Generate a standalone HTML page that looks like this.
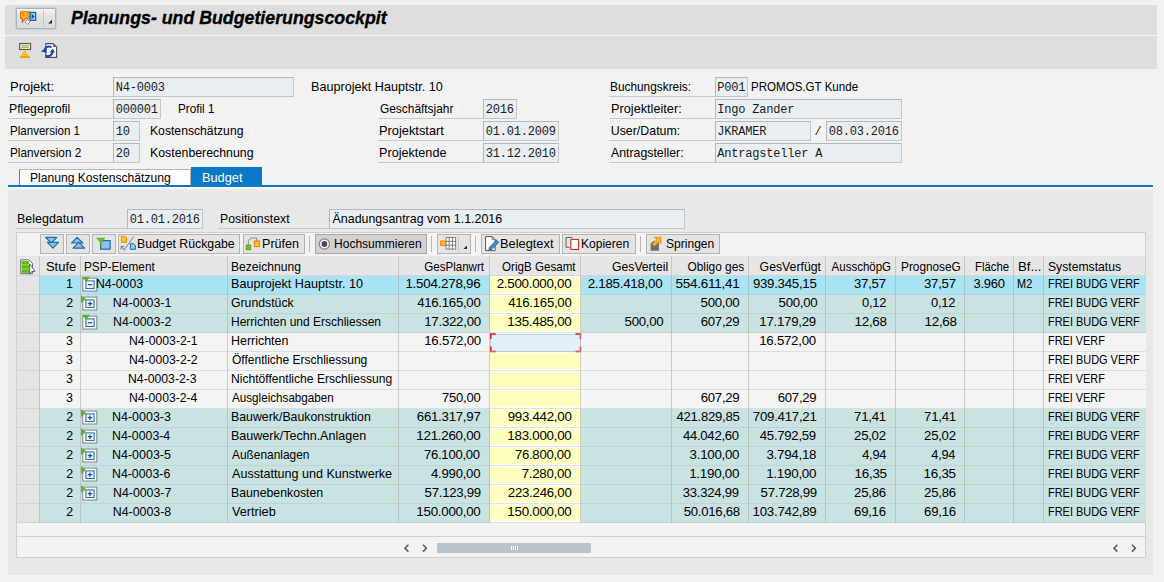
<!DOCTYPE html>
<html lang="de"><head><meta charset="utf-8"><title>Planungs- und Budgetierungscockpit</title>
<style>
html,body{margin:0;padding:0;}
body{width:1164px;height:582px;overflow:hidden;background:#f2f2f2;font-family:"Liberation Sans",sans-serif;font-size:12px;color:#000;}
#root{position:relative;width:1164px;height:582px;overflow:hidden;}
#root div{position:absolute;box-sizing:border-box;}
#root svg{position:absolute;overflow:visible;}
.t,.m,.ttl,.tw{position:absolute;white-space:pre;line-height:14px;height:14px;margin-top:-11px;font-size:12.4px;}
.m{font-family:"Liberation Mono",monospace;font-size:12px;letter-spacing:-0.2px;margin-top:-10.2px;color:#1c1c1c;}
.ttl{font-weight:bold;font-style:italic;font-size:17.6px;line-height:20px;height:20px;margin-top:-16px;-webkit-text-stroke:0.35px #000;}
.tw{color:#fff;}
.inp{background:#e9eef2;border:1px solid #c3c7ca;border-top-color:#b4b8bc;border-left-color:#b4b8bc;}
.ul{background:#c9c9c9;}
.btn{background:#e4e4e4;border:1px solid #b3b3b3;}

</style></head><body>
<div id="root">
<div style="left:5px;top:5px;width:1152px;height:30px;background:#dedede;"></div>
<div style="left:5px;top:35px;width:1152px;height:1px;background:#fafafa;"></div>
<div style="left:5px;top:36px;width:1152px;height:32.5px;background:#dedede;"></div>
<div style="left:16px;top:8.2px;width:40px;height:20.4px;background:linear-gradient(#f6f6f6,#e4e4e4 30%,#dcdcdc);border:1px solid #9fb4c8;border-radius:1px;box-shadow:0 0 0 1px rgba(160,185,210,0.35);"></div>
<div style="left:43px;top:10px;width:1px;height:17px;background:#c4c4c4;"></div>
<svg style="left:18px;top:9px" width="24" height="18" viewBox="18 9 24 18">
<path d="M20.7 11.7h8.6v6.4h-3.6l-3.4 4v-4h-1.6z" fill="#ffd21c" stroke="#e8590c" stroke-width="1.1"/>
<path d="M22.3 13.6h1.6m1 0h1m1 0h1.2M22.3 15.8h2.8m1 0h2" stroke="#e8590c" stroke-width="1"/>
<path d="M27.5 19.2l2.6 2.6-2.6 2.6-2.6-2.6z" fill="#fff" stroke="#666" stroke-width="0.8"/>
<rect x="30.1" y="12.4" width="5.6" height="8" fill="#9cc4ec" stroke="#0a6eb4" stroke-width="1.2"/>
<path d="M31.6 13.8v5.2l3-2.6z" fill="#0a50a0"/>
</svg>
<svg style="left:47px;top:19px" width="6" height="6" viewBox="0 0 6 6"><path d="M5 0.8V4.6H1.2z" fill="#222"/></svg>
<span id="t1" class="ttl" style="transform:scaleX(1.009);transform-origin:0 0;left:70.7px;top:24.0px;">Planungs- und Budgetierungscockpit</span>
<svg style="left:17px;top:41px" width="18" height="19" viewBox="17 41 18 19">
<rect x="19.6" y="43.5" width="11" height="6" fill="#e6f0b8" stroke="#585858" stroke-width="1.1"/>
<path d="M21.5 45.6h7.2M21.5 47.4h7.2" stroke="#8a9a60" stroke-width="0.8"/>
<path d="M25.1 50.2l-4.9 7.2h9.8z" fill="#ffc20e"/>
<path d="M20.2 57.1h9.8" stroke="#f07018" stroke-width="1"/>
<path d="M25.1 50.2l-4.9 7.2" stroke="#f8981c" stroke-width="0.6" fill="none"/>
</svg>
<svg style="left:40px;top:41px" width="19" height="19" viewBox="40 41 19 19">
<path d="M45.8 43.6h7.4l3.4 3.4v10.4h-10.8z" fill="#fff" stroke="#4a4a4a" stroke-width="1.1"/>
<path d="M53.2 43.6v3.4h3.4z" fill="#666"/>
<path d="M51.4 47.3A4.5 4.5 0 0 0 44.6 49.8" fill="none" stroke="#1746a8" stroke-width="2.1"/>
<path d="M40.9 51.2L46.2 47.9L46.8 52.9Z" fill="#1746a8"/>
<path d="M45.6 55.6A4.6 4.6 0 0 0 52.4 52" fill="none" stroke="#1746a8" stroke-width="2.1"/>
<path d="M52.5 48.4L49.6 52.6H55.2Z" fill="#1746a8"/>
</svg>
<span id="t2" class="t" style="transform:scaleX(1.048);transform-origin:0 0;left:9.7px;top:91px;">Projekt:</span>
<div class="ul" style="left:8px;top:96px;width:105px;height:1px;"></div>
<span id="t3" class="t" style="transform:scaleX(0.989);transform-origin:0 0;left:9.3px;top:113px;">Pflegeprofil</span>
<div class="ul" style="left:8px;top:118px;width:105px;height:1px;"></div>
<span id="t4" class="t" style="transform:scaleX(0.933);transform-origin:0 0;left:9.6px;top:135px;">Planversion 1</span>
<div class="ul" style="left:8px;top:140px;width:105px;height:1px;"></div>
<span id="t5" class="t" style="transform:scaleX(0.949);transform-origin:0 0;left:9.6px;top:157px;">Planversion 2</span>
<div class="ul" style="left:8px;top:162px;width:105px;height:1px;"></div>
<div class="inp" style="left:113px;top:77px;width:181px;height:20px;"></div>
<span id="t6" class="m" style="left:115.8px;top:91px;">N4-0003</span>
<div class="inp" style="left:113px;top:99px;width:47.5px;height:20px;"></div>
<span id="t7" class="m" style="left:115.8px;top:113px;">000001</span>
<div class="inp" style="left:113px;top:121px;width:26.5px;height:20px;"></div>
<span id="t8" class="m" style="left:115.8px;top:135px;">10</span>
<div class="inp" style="left:113px;top:143px;width:26.5px;height:20px;"></div>
<span id="t9" class="m" style="left:115.8px;top:157px;">20</span>
<span id="t10" class="t" style="transform:scaleX(0.944);transform-origin:0 0;left:178.2px;top:113px;">Profil 1</span>
<span id="t11" class="t" style="transform:scaleX(0.983);transform-origin:0 0;left:149.8px;top:135px;">Kostenschätzung</span>
<span id="t12" class="t" style="transform:scaleX(0.995);transform-origin:0 0;left:150.1px;top:157px;">Kostenberechnung</span>
<span id="t13" class="t" style="transform:scaleX(1.018);transform-origin:0 0;left:311.3px;top:91px;">Bauprojekt Hauptstr. 10</span>
<span id="t14" class="t" style="transform:scaleX(0.960);transform-origin:0 0;left:379.9px;top:113px;">Geschäftsjahr</span>
<div class="ul" style="left:377.5px;top:118px;width:105.5px;height:1px;"></div>
<span id="t15" class="t" style="transform:scaleX(1.035);transform-origin:0 0;left:379.1px;top:135px;">Projektstart</span>
<div class="ul" style="left:377.5px;top:140px;width:105.5px;height:1px;"></div>
<span id="t16" class="t" style="transform:scaleX(1.020);transform-origin:0 0;left:379.1px;top:157px;">Projektende</span>
<div class="ul" style="left:377.5px;top:162px;width:105.5px;height:1px;"></div>
<div class="inp" style="left:483px;top:99px;width:34px;height:20px;"></div>
<span id="t17" class="m" style="left:485.8px;top:113px;">2016</span>
<div class="inp" style="left:483px;top:121px;width:76px;height:20px;"></div>
<span id="t18" class="m" style="left:485.8px;top:135px;">01.01.2009</span>
<div class="inp" style="left:483px;top:143px;width:76px;height:20px;"></div>
<span id="t19" class="m" style="left:485.8px;top:157px;">31.12.2010</span>
<span id="t20" class="t" style="transform:scaleX(0.957);transform-origin:0 0;left:610.3px;top:91px;">Buchungskreis:</span>
<div class="ul" style="left:608.5px;top:96px;width:106px;height:1px;"></div>
<span id="t21" class="t" style="transform:scaleX(1.027);transform-origin:0 0;left:610.9px;top:113px;">Projektleiter:</span>
<div class="ul" style="left:608.5px;top:118px;width:106px;height:1px;"></div>
<span id="t22" class="t" style="left:610.7px;top:135px;">User/Datum:</span>
<div class="ul" style="left:608.5px;top:140px;width:106px;height:1px;"></div>
<span id="t23" class="t" style="transform:scaleX(0.994);transform-origin:0 0;left:610.8px;top:157px;">Antragsteller:</span>
<div class="ul" style="left:608.5px;top:162px;width:106px;height:1px;"></div>
<div class="inp" style="left:714.5px;top:77px;width:33px;height:20px;"></div>
<span id="t24" class="m" style="left:717.3px;top:91px;">P001</span>
<span id="t25" class="t" style="transform:scaleX(0.933);transform-origin:0 0;left:751.4px;top:91px;">PROMOS.GT Kunde</span>
<div class="inp" style="left:714.5px;top:99px;width:187px;height:20px;"></div>
<span id="t26" class="m" style="left:717.3px;top:113px;">Ingo Zander</span>
<div class="inp" style="left:714.5px;top:121px;width:96px;height:20px;"></div>
<span id="t27" class="m" style="left:717.3px;top:135px;">JKRAMER</span>
<span id="t28" class="m" style="left:814.6px;top:135px;">/</span>
<div class="inp" style="left:826px;top:121px;width:75.5px;height:20px;"></div>
<span id="t29" class="m" style="left:828.8px;top:135px;">08.03.2016</span>
<div class="inp" style="left:714.5px;top:143px;width:187px;height:20px;"></div>
<span id="t30" class="m" style="left:717.3px;top:157px;">Antragsteller A</span>
<div style="left:18.8px;top:168.6px;width:172.2px;height:17px;background:#fefefe;border:1px solid #b4b4b4;border-left-color:#7c7c7c;border-bottom:none;"></div>
<div style="left:190.8px;top:166.7px;width:71.3px;height:18.5px;background:#0a78c4;"></div>
<span id="t31" class="t" style="transform:scaleX(0.977);transform-origin:0 0;left:29.5px;top:181.6px;">Planung Kostenschätzung</span>
<span id="t32" class="t tw" style="transform:scaleX(1.030);transform-origin:0 0;left:201.6px;top:181.6px;">Budget</span>
<div style="left:8px;top:184.8px;width:1145px;height:2.2px;background:#0a78c4;"></div>
<div style="left:8px;top:187px;width:1145px;height:387.5px;background:#e8e8e8;"></div>
<div style="left:8px;top:187px;width:1145px;height:3px;background:linear-gradient(#fcfcfc,#f6f6f6 55%,#e8e8e8);"></div>
<span id="t33" class="t" style="transform:scaleX(1.006);transform-origin:0 0;left:16.5px;top:223px;">Belegdatum</span>
<div class="ul" style="left:15.5px;top:228px;width:111.5px;height:1px;"></div>
<div class="inp" style="left:127px;top:209px;width:75.5px;height:20px;"></div>
<span id="t34" class="m" style="left:129.8px;top:223px;">01.01.2016</span>
<span id="t35" class="t" style="transform:scaleX(0.991);transform-origin:0 0;left:219.5px;top:223px;">Positionstext</span>
<div class="ul" style="left:217.5px;top:228px;width:111.5px;height:1px;"></div>
<div class="inp" style="left:329px;top:209px;width:356px;height:20px;"></div>
<span id="t36" class="t" style="left:332.6px;top:223px;">Änadungsantrag vom 1.1.2016</span>
<div style="left:15.5px;top:231.5px;width:1130px;height:326.5px;background:#f3f3f3;border:1px solid #cfcfcf;"></div>
<div style="left:16.5px;top:232.5px;width:1128px;height:22.5px;background:#f3f3f3;"></div>
<div class="btn" style="left:40px;top:234px;width:23.8px;height:19.5px;"></div>
<div class="btn" style="left:66px;top:234px;width:23.8px;height:19.5px;"></div>
<div class="btn" style="left:92.3px;top:234px;width:23.8px;height:19.5px;"></div>
<div class="btn" style="left:118.2px;top:234px;width:122px;height:19.5px;"></div>
<div class="btn" style="left:242.6px;top:234px;width:62px;height:19.5px;"></div>
<div style="left:309px;top:236px;width:1px;height:16px;background:#b8b8b8;"></div>
<div class="btn" style="left:314.5px;top:234px;width:112.5px;height:19.5px;background:#d2d2d2;border-color:#a8a8a8;"></div>
<div style="left:431px;top:236px;width:1px;height:16px;background:#b8b8b8;"></div>
<div class="btn" style="left:437px;top:234px;width:33.5px;height:19.5px;"></div>
<div style="left:457.5px;top:236px;width:1px;height:16px;background:#c8c8c8;"></div>
<div style="left:475px;top:236px;width:1px;height:16px;background:#b8b8b8;"></div>
<div class="btn" style="left:481.2px;top:234px;width:78.6px;height:19.5px;"></div>
<div class="btn" style="left:562px;top:234px;width:73.8px;height:19.5px;"></div>
<div style="left:640.2px;top:236px;width:1px;height:16px;background:#b8b8b8;"></div>
<div class="btn" style="left:646px;top:234px;width:73.8px;height:19.5px;"></div>
<span id="t37" class="t" style="transform:scaleX(0.991);transform-origin:0 0;left:136.9px;top:248px;">Budget Rückgabe</span>
<span id="t38" class="t" style="transform:scaleX(1.015);transform-origin:0 0;left:261.8px;top:248px;">Prüfen</span>
<span id="t39" class="t" style="transform:scaleX(0.971);transform-origin:0 0;left:333.5px;top:248px;">Hochsummieren</span>
<span id="t40" class="t" style="transform:scaleX(1.035);transform-origin:0 0;left:500.1px;top:248px;">Belegtext</span>
<span id="t41" class="t" style="transform:scaleX(0.970);transform-origin:0 0;left:581.2px;top:248px;">Kopieren</span>
<span id="t42" class="t" style="transform:scaleX(0.973);transform-origin:0 0;left:665.7px;top:248px;">Springen</span>
<svg style="left:40px;top:234px" width="80" height="20" viewBox="40 234 80 20">
<path d="M45.6 237.4h11.2l-5.6 5.6z" fill="#9bbce0" stroke="#1470ac" stroke-width="1.2" stroke-linejoin="round"/>
<path d="M47.4 242.4h11.2l-5.6 5.8z" fill="#9bbce0" stroke="#1470ac" stroke-width="1.2" stroke-linejoin="round"/>
<path d="M77.2 237.4l5.6 5.6h-11.2z" fill="#9bbce0" stroke="#1470ac" stroke-width="1.2" stroke-linejoin="round"/>
<path d="M78.8 242.2l5.8 6h-11.6z" fill="#9bbce0" stroke="#1470ac" stroke-width="1.2" stroke-linejoin="round"/>
<rect x="100.6" y="240.6" width="9.6" height="8.6" fill="#9bbce0" stroke="#1470ac" stroke-width="1.2"/>
<path d="M96.6 238h8.4l-3.4 4v3.4h-1.6v-3.4z" fill="#6cc02c" stroke="#5aa824" stroke-width="0.5"/>
</svg>
<svg style="left:120px;top:235px" width="18" height="18" viewBox="120 235 18 18">
<path d="M121.4 236.2h3.4l1.8 1.8v4.4h-5.2z" fill="#ffc414" stroke="#f08010" stroke-width="0.9"/>
<path d="M133.6 236.8l-9.6 13.4" stroke="#707070" stroke-width="0.9"/>
<path d="M130.4 243.7h3.2l1.8 1.8v3.8h-5z" fill="#9cc4ec" stroke="#0a6eb4" stroke-width="1"/>
<path d="M121.2 246.4h3.2m-3.2 0v3m0-3l3.6 4" stroke="#555" stroke-width="0.8" fill="none"/>
</svg>
<svg style="left:245px;top:236px" width="17" height="16" viewBox="245 236 17 16">
<path d="M248.4 245v-4.6l2.8-2.4h5.6v3" stroke="#808080" stroke-width="0.9" fill="none"/>
<rect x="246.2" y="245" width="4.6" height="4.8" fill="#6cc02c" stroke="#4a9a1c" stroke-width="0.8"/>
<rect x="254.4" y="241" width="5.2" height="5.6" fill="#ffc414" stroke="#f07810" stroke-width="1"/>
</svg>
<svg style="left:318px;top:238px" width="12" height="12" viewBox="0 0 12 12">
<circle cx="6.4" cy="6" r="5.1" fill="#f6f6f6" stroke="#808080" stroke-width="1.2"/><circle cx="6.4" cy="6" r="2.9" fill="#4a4a4a"/></svg>
<svg style="left:440px;top:236px" width="30" height="16" viewBox="440 236 30 16">
<path d="M446 237.5h9.6v11.6h-9.6zM446 241.4h9.6M446 245.2h9.6M449.2 237.5v11.6M452.4 237.5v11.6" stroke="#707070" stroke-width="0.9" fill="#fff"/>
<rect x="440.6" y="241" width="5" height="4.4" fill="#ffc414" stroke="#f07810" stroke-width="0.9"/>
<path d="M467 245.4v3.6h-3.6z" fill="#222"/>
</svg>
<svg style="left:483px;top:235px" width="18" height="18" viewBox="483 235 18 18">
<path d="M485.6 236.6h6.6l3 3v11h-9.6z" fill="#fff" stroke="#555" stroke-width="1"/>
<path d="M492.2 236.6v3h3" fill="none" stroke="#555" stroke-width="0.8"/>
<path d="M496.4 240l2.4 2.2-7 7.4-3 0.8 0.6-3z" fill="#3c8cd0" stroke="#1a64a8" stroke-width="0.8"/>
</svg>
<svg style="left:564px;top:236px" width="18" height="16" viewBox="564 236 18 16">
<path d="M572.6 237.5h-6.6v9.8h3.6" fill="none" stroke="#606060" stroke-width="1"/>
<rect x="570.8" y="239.5" width="7.8" height="10" fill="#fff" stroke="#c8341c" stroke-width="1.1"/>
</svg>
<svg style="left:648px;top:235px" width="18" height="18" viewBox="648 235 18 18">
<path d="M650.6 243.4l3.4-3 2.4 3.4 2.6-1.4v8.4h-8.4z" fill="#707070"/>
<path d="M654.4 237.2h6.6v6.6l-2.2-2.2-4.4 4.6-2.2-2.2 4.6-4.4z" fill="#ffb414" stroke="#f07810" stroke-width="0.7"/>
</svg>
<div style="left:16.5px;top:255.5px;width:1128px;height:20.5px;background:#e6e6e6;"></div>
<svg style="left:19px;top:258px" width="18" height="18" viewBox="19 258 18 18">
<path d="M20.7 259.9h8.3l3.5 3.5v10.3h-11.8z" fill="#fff" stroke="#6a6a6a" stroke-width="1"/>
<path d="M21.7 261.2h7.2v11.6h-7.2z" fill="#a8d878"/>
<path d="M21.7 261.3h7.2v3h-7.2zM21.7 265.2h7.2v3.3h-7.2zM21.7 269.5h7.2v3.2h-7.2z" fill="#5cb800"/>
<path d="M29.6 263.9v9.8l2.4-2.2 2.9-0.2z" fill="#fff" stroke="#2a4aa0" stroke-width="0.9"/>
</svg>
<span id="t43" class="t" style="transform:scaleX(1.043);transform-origin:0 0;left:45.5px;top:271px;">Stufe</span>
<span id="t44" class="t" style="transform:scaleX(0.951);transform-origin:0 0;left:83.8px;top:271px;">PSP-Element</span>
<span id="t45" class="t" style="transform:scaleX(0.975);transform-origin:0 0;left:231.1px;top:271px;">Bezeichnung</span>
<span id="t46" class="t" style="transform:scaleX(0.934);transform-origin:100% 0;right:679.6px;top:271px;">GesPlanwrt</span>
<span id="t47" class="t" style="transform:scaleX(0.935);transform-origin:100% 0;right:588.1px;top:271px;">OrigB Gesamt</span>
<span id="t48" class="t" style="transform:scaleX(0.981);transform-origin:100% 0;right:496.2px;top:271px;">GesVerteil</span>
<span id="t49" class="t" style="transform:scaleX(0.959);transform-origin:100% 0;right:419.9px;top:271px;">Obligo ges</span>
<span id="t50" class="t" style="transform:scaleX(0.990);transform-origin:100% 0;right:343.2px;top:271px;">GesVerfügt</span>
<span id="t51" class="t" style="transform:scaleX(0.929);transform-origin:100% 0;right:273.1px;top:271px;">AusschöpG</span>
<span id="t52" class="t" style="transform:scaleX(0.951);transform-origin:100% 0;right:203.6px;top:271px;">PrognoseG</span>
<span id="t53" class="t" style="transform:scaleX(0.919);transform-origin:100% 0;right:154.8px;top:271px;">Fläche</span>
<span id="t54" class="t" style="transform:scaleX(1.063);transform-origin:0 0;left:1017.8px;top:271px;">Bf...</span>
<span id="t55" class="t" style="transform:scaleX(0.983);transform-origin:0 0;left:1047.8px;top:271px;">Systemstatus</span>
<div style="left:16.5px;top:276px;width:23.0px;height:247px;background:#e4e4e4;"></div>
<div style="left:39.5px;top:276px;width:1106.0px;height:19px;background:#a9e3f4;"></div>
<div style="left:490.0px;top:276px;width:90.5px;height:19px;background:#fdfdfd;"></div>
<div style="left:490.0px;top:277px;width:90.5px;height:16px;background:#ffffc0;"></div>
<span id="t56" class="t" style="right:1091.2px;top:288.3px;">1</span>
<svg style="left:81px;top:276px" width="17" height="16" viewBox="0 0 17 16"><rect x="1.8" y="2.1" width="14" height="12.9" fill="#fff" stroke="#7a7a7a" stroke-width="0.9"/><rect x="4.9" y="4.9" width="8.2" height="7.6" fill="#f2f7fc" stroke="#2a6fb0" stroke-width="1.1"/><path d="M6.8 8.7h4.4" stroke="#1a4a90" stroke-width="1.2"/><path d="M0.9 0.8h8.2l-4.1 5.2z" fill="#5cb42c"/></svg>
<span id="t57" class="t" style="transform:scaleX(0.989);transform-origin:0 0;left:96.2px;top:288.3px;">N4-0003</span>
<span id="t58" class="t" style="transform:scaleX(1.019);transform-origin:0 0;left:231.1px;top:288.3px;">Bauprojekt Hauptstr. 10</span>
<span id="t59" class="t" style="letter-spacing:-0.25px;transform:scaleX(1.080);transform-origin:100% 0;right:683.6px;top:288.3px;">1.504.278,96</span>
<span id="t60" class="t" style="letter-spacing:-0.25px;transform:scaleX(1.077);transform-origin:100% 0;right:592.4px;top:288.3px;">2.500.000,00</span>
<span id="t61" class="t" style="letter-spacing:-0.25px;transform:scaleX(1.077);transform-origin:100% 0;right:501.8px;top:288.3px;">2.185.418,00</span>
<span id="t62" class="t" style="letter-spacing:-0.25px;transform:scaleX(1.092);transform-origin:100% 0;right:424.6px;top:288.3px;">554.611,41</span>
<span id="t63" class="t" style="letter-spacing:-0.25px;transform:scaleX(1.069);transform-origin:100% 0;right:347.2px;top:288.3px;">939.345,15</span>
<span id="t64" class="t" style="letter-spacing:-0.25px;transform:scaleX(1.067);transform-origin:100% 0;right:278.4px;top:288.3px;">37,57</span>
<span id="t65" class="t" style="letter-spacing:-0.25px;transform:scaleX(1.067);transform-origin:100% 0;right:208.3px;top:288.3px;">37,57</span>
<span id="t66" class="t" style="letter-spacing:-0.25px;transform:scaleX(1.050);transform-origin:100% 0;right:159.5px;top:288.3px;">3.960</span>
<span id="t67" class="t" style="transform:scaleX(0.885);transform-origin:0 0;left:1017.4px;top:288.3px;">M2</span>
<span id="t68" class="t" style="transform:scaleX(0.883);transform-origin:0 0;left:1048.0px;top:288.3px;">FREI BUDG VERF</span>
<div style="left:39.5px;top:295px;width:1106.0px;height:19px;background:#c9e2e2;"></div>
<div style="left:490.0px;top:295px;width:90.5px;height:19px;background:#fdfdfd;"></div>
<div style="left:490.0px;top:296px;width:90.5px;height:16px;background:#ffffc0;"></div>
<span id="t69" class="t" style="right:1090.8px;top:307.3px;">2</span>
<svg style="left:81px;top:295px" width="17" height="16" viewBox="0 0 17 16"><rect x="1.8" y="2.1" width="14" height="12.9" fill="#fff" stroke="#7a7a7a" stroke-width="0.9"/><rect x="4.9" y="4.9" width="8.2" height="7.6" fill="#f2f7fc" stroke="#2a6fb0" stroke-width="1.1"/><path d="M6.8 8.7h4.4M9 6.5v4.4" stroke="#1a4a90" stroke-width="1.2"/><path d="M0 0.2l5.2 3.9-5.2 3.9z" fill="#5cb42c"/></svg>
<span id="t70" class="t" style="left:112.8px;top:307.3px;">N4-0003-1</span>
<span id="t71" class="t" style="transform:scaleX(0.989);transform-origin:0 0;left:231.4px;top:307.3px;">Grundstück</span>
<span id="t72" class="t" style="letter-spacing:-0.25px;transform:scaleX(1.065);transform-origin:100% 0;right:683.7px;top:307.3px;">416.165,00</span>
<span id="t73" class="t" style="letter-spacing:-0.25px;transform:scaleX(1.065);transform-origin:100% 0;right:592.7px;top:307.3px;">416.165,00</span>
<span id="t74" class="t" style="letter-spacing:-0.25px;transform:scaleX(1.067);transform-origin:100% 0;right:424.4px;top:307.3px;">500,00</span>
<span id="t75" class="t" style="letter-spacing:-0.25px;transform:scaleX(1.067);transform-origin:100% 0;right:347.0px;top:307.3px;">500,00</span>
<span id="t76" class="t" style="letter-spacing:-0.25px;transform:scaleX(1.044);transform-origin:100% 0;right:278.3px;top:307.3px;">0,12</span>
<span id="t77" class="t" style="letter-spacing:-0.25px;transform:scaleX(1.041);transform-origin:100% 0;right:208.7px;top:307.3px;">0,12</span>
<span id="t78" class="t" style="transform:scaleX(0.883);transform-origin:0 0;left:1048.0px;top:307.3px;">FREI BUDG VERF</span>
<div style="left:39.5px;top:314px;width:1106.0px;height:19px;background:#c9e2e2;"></div>
<div style="left:490.0px;top:314px;width:90.5px;height:19px;background:#fdfdfd;"></div>
<div style="left:490.0px;top:315px;width:90.5px;height:16px;background:#ffffc0;"></div>
<span id="t79" class="t" style="right:1090.8px;top:326.3px;">2</span>
<svg style="left:81px;top:314px" width="17" height="16" viewBox="0 0 17 16"><rect x="1.8" y="2.1" width="14" height="12.9" fill="#fff" stroke="#7a7a7a" stroke-width="0.9"/><rect x="4.9" y="4.9" width="8.2" height="7.6" fill="#f2f7fc" stroke="#2a6fb0" stroke-width="1.1"/><path d="M6.8 8.7h4.4" stroke="#1a4a90" stroke-width="1.2"/><path d="M0.9 0.8h8.2l-4.1 5.2z" fill="#5cb42c"/></svg>
<span id="t80" class="t" style="transform:scaleX(0.996);transform-origin:0 0;left:112.7px;top:326.3px;">N4-0003-2</span>
<span id="t81" class="t" style="transform:scaleX(0.968);transform-origin:0 0;left:231.2px;top:326.3px;">Herrichten und Erschliessen</span>
<span id="t82" class="t" style="letter-spacing:-0.25px;transform:scaleX(1.071);transform-origin:100% 0;right:683.5px;top:326.3px;">17.322,00</span>
<span id="t83" class="t" style="letter-spacing:-0.25px;transform:scaleX(1.078);transform-origin:100% 0;right:592.5px;top:326.3px;">135.485,00</span>
<span id="t84" class="t" style="letter-spacing:-0.25px;transform:scaleX(1.067);transform-origin:100% 0;right:501.0px;top:326.3px;">500,00</span>
<span id="t85" class="t" style="letter-spacing:-0.25px;transform:scaleX(1.062);transform-origin:100% 0;right:424.3px;top:326.3px;">607,29</span>
<span id="t86" class="t" style="letter-spacing:-0.25px;transform:scaleX(1.069);transform-origin:100% 0;right:348.0px;top:326.3px;">17.179,29</span>
<span id="t87" class="t" style="letter-spacing:-0.25px;transform:scaleX(1.084);transform-origin:100% 0;right:277.6px;top:326.3px;">12,68</span>
<span id="t88" class="t" style="letter-spacing:-0.25px;transform:scaleX(1.084);transform-origin:100% 0;right:207.7px;top:326.3px;">12,68</span>
<span id="t89" class="t" style="transform:scaleX(0.883);transform-origin:0 0;left:1048.0px;top:326.3px;">FREI BUDG VERF</span>
<div style="left:39.5px;top:333px;width:1106.0px;height:19px;background:#f4f4f4;"></div>
<div style="left:490.0px;top:333px;width:90.5px;height:19px;background:#fdfdfd;"></div>
<div style="left:490.0px;top:333.5px;width:90.5px;height:18px;background:#e3eff8;border:1px solid #c4ccd4;"></div>
<span id="t90" class="t" style="right:1091.2px;top:345.3px;">3</span>
<span id="t91" class="t" style="transform:scaleX(0.987);transform-origin:0 0;left:129.0px;top:345.3px;">N4-0003-2-1</span>
<span id="t92" class="t" style="transform:scaleX(1.004);transform-origin:0 0;left:231.4px;top:345.3px;">Herrichten</span>
<span id="t93" class="t" style="letter-spacing:-0.25px;transform:scaleX(1.071);transform-origin:100% 0;right:683.5px;top:345.3px;">16.572,00</span>
<span id="t94" class="t" style="letter-spacing:-0.25px;transform:scaleX(1.071);transform-origin:100% 0;right:348.0px;top:345.3px;">16.572,00</span>
<span id="t95" class="t" style="transform:scaleX(0.879);transform-origin:0 0;left:1048.1px;top:345.3px;">FREI VERF</span>
<div style="left:39.5px;top:352px;width:1106.0px;height:19px;background:#f4f4f4;"></div>
<div style="left:490.0px;top:352px;width:90.5px;height:19px;background:#fdfdfd;"></div>
<div style="left:490.0px;top:353px;width:90.5px;height:16px;background:#ffffc0;"></div>
<span id="t96" class="t" style="right:1091.2px;top:364.3px;">3</span>
<span id="t97" class="t" style="transform:scaleX(0.986);transform-origin:0 0;left:129.0px;top:364.3px;">N4-0003-2-2</span>
<span id="t98" class="t" style="transform:scaleX(0.969);transform-origin:0 0;left:231.6px;top:364.3px;">Öffentliche Erschliessung</span>
<span id="t99" class="t" style="transform:scaleX(0.883);transform-origin:0 0;left:1048.0px;top:364.3px;">FREI BUDG VERF</span>
<div style="left:39.5px;top:371px;width:1106.0px;height:19px;background:#f4f4f4;"></div>
<div style="left:490.0px;top:371px;width:90.5px;height:19px;background:#fdfdfd;"></div>
<div style="left:490.0px;top:372px;width:90.5px;height:16px;background:#ffffc0;"></div>
<span id="t100" class="t" style="right:1091.2px;top:383.3px;">3</span>
<span id="t101" class="t" style="transform:scaleX(0.987);transform-origin:0 0;left:128.2px;top:383.3px;">N4-0003-2-3</span>
<span id="t102" class="t" style="transform:scaleX(0.977);transform-origin:0 0;left:231.1px;top:383.3px;">Nichtöffentliche Erschliessung</span>
<span id="t103" class="t" style="transform:scaleX(0.879);transform-origin:0 0;left:1048.1px;top:383.3px;">FREI VERF</span>
<div style="left:39.5px;top:390px;width:1106.0px;height:19px;background:#f4f4f4;"></div>
<div style="left:490.0px;top:390px;width:90.5px;height:19px;background:#fdfdfd;"></div>
<div style="left:490.0px;top:391px;width:90.5px;height:16px;background:#ffffc0;"></div>
<span id="t104" class="t" style="right:1091.2px;top:402.3px;">3</span>
<span id="t105" class="t" style="transform:scaleX(0.982);transform-origin:0 0;left:128.8px;top:402.3px;">N4-0003-2-4</span>
<span id="t106" class="t" style="transform:scaleX(0.941);transform-origin:0 0;left:231.6px;top:402.3px;">Ausgleichsabgaben</span>
<span id="t107" class="t" style="letter-spacing:-0.25px;transform:scaleX(1.052);transform-origin:100% 0;right:683.4px;top:402.3px;">750,00</span>
<span id="t108" class="t" style="letter-spacing:-0.25px;transform:scaleX(1.062);transform-origin:100% 0;right:424.3px;top:402.3px;">607,29</span>
<span id="t109" class="t" style="letter-spacing:-0.25px;transform:scaleX(1.062);transform-origin:100% 0;right:347.7px;top:402.3px;">607,29</span>
<span id="t110" class="t" style="transform:scaleX(0.879);transform-origin:0 0;left:1048.1px;top:402.3px;">FREI VERF</span>
<div style="left:39.5px;top:409px;width:1106.0px;height:19px;background:#c9e2e2;"></div>
<div style="left:490.0px;top:409px;width:90.5px;height:19px;background:#fdfdfd;"></div>
<div style="left:490.0px;top:410px;width:90.5px;height:16px;background:#ffffc0;"></div>
<span id="t111" class="t" style="right:1090.8px;top:421.3px;">2</span>
<svg style="left:81px;top:409px" width="17" height="16" viewBox="0 0 17 16"><rect x="1.8" y="2.1" width="14" height="12.9" fill="#fff" stroke="#7a7a7a" stroke-width="0.9"/><rect x="4.9" y="4.9" width="8.2" height="7.6" fill="#f2f7fc" stroke="#2a6fb0" stroke-width="1.1"/><path d="M6.8 8.7h4.4M9 6.5v4.4" stroke="#1a4a90" stroke-width="1.2"/><path d="M0 0.2l5.2 3.9-5.2 3.9z" fill="#5cb42c"/></svg>
<span id="t112" class="t" style="transform:scaleX(1.006);transform-origin:0 0;left:112.4px;top:421.3px;">N4-0003-3</span>
<span id="t113" class="t" style="transform:scaleX(0.995);transform-origin:0 0;left:231.3px;top:421.3px;">Bauwerk/Baukonstruktion</span>
<span id="t114" class="t" style="letter-spacing:-0.25px;transform:scaleX(1.071);transform-origin:100% 0;right:683.8px;top:421.3px;">661.317,97</span>
<span id="t115" class="t" style="letter-spacing:-0.25px;transform:scaleX(1.072);transform-origin:100% 0;right:592.9px;top:421.3px;">993.442,00</span>
<span id="t116" class="t" style="letter-spacing:-0.25px;transform:scaleX(1.060);transform-origin:100% 0;right:424.4px;top:421.3px;">421.829,85</span>
<span id="t117" class="t" style="letter-spacing:-0.25px;transform:scaleX(1.070);transform-origin:100% 0;right:347.4px;top:421.3px;">709.417,21</span>
<span id="t118" class="t" style="letter-spacing:-0.25px;transform:scaleX(1.063);transform-origin:100% 0;right:278.1px;top:421.3px;">71,41</span>
<span id="t119" class="t" style="letter-spacing:-0.25px;transform:scaleX(1.063);transform-origin:100% 0;right:207.9px;top:421.3px;">71,41</span>
<span id="t120" class="t" style="transform:scaleX(0.883);transform-origin:0 0;left:1048.0px;top:421.3px;">FREI BUDG VERF</span>
<div style="left:39.5px;top:428px;width:1106.0px;height:19px;background:#c9e2e2;"></div>
<div style="left:490.0px;top:428px;width:90.5px;height:19px;background:#fdfdfd;"></div>
<div style="left:490.0px;top:429px;width:90.5px;height:16px;background:#ffffc0;"></div>
<span id="t121" class="t" style="right:1090.8px;top:440.3px;">2</span>
<svg style="left:81px;top:428px" width="17" height="16" viewBox="0 0 17 16"><rect x="1.8" y="2.1" width="14" height="12.9" fill="#fff" stroke="#7a7a7a" stroke-width="0.9"/><rect x="4.9" y="4.9" width="8.2" height="7.6" fill="#f2f7fc" stroke="#2a6fb0" stroke-width="1.1"/><path d="M6.8 8.7h4.4M9 6.5v4.4" stroke="#1a4a90" stroke-width="1.2"/><path d="M0 0.2l5.2 3.9-5.2 3.9z" fill="#5cb42c"/></svg>
<span id="t122" class="t" style="transform:scaleX(0.994);transform-origin:0 0;left:112.4px;top:440.3px;">N4-0003-4</span>
<span id="t123" class="t" style="transform:scaleX(1.011);transform-origin:0 0;left:231.1px;top:440.3px;">Bauwerk/Techn.Anlagen</span>
<span id="t124" class="t" style="letter-spacing:-0.25px;transform:scaleX(1.078);transform-origin:100% 0;right:683.5px;top:440.3px;">121.260,00</span>
<span id="t125" class="t" style="letter-spacing:-0.25px;transform:scaleX(1.078);transform-origin:100% 0;right:592.5px;top:440.3px;">183.000,00</span>
<span id="t126" class="t" style="letter-spacing:-0.25px;transform:scaleX(1.059);transform-origin:100% 0;right:424.9px;top:440.3px;">44.042,60</span>
<span id="t127" class="t" style="letter-spacing:-0.25px;transform:scaleX(1.060);transform-origin:100% 0;right:347.9px;top:440.3px;">45.792,59</span>
<span id="t128" class="t" style="letter-spacing:-0.25px;transform:scaleX(1.064);transform-origin:100% 0;right:278.4px;top:440.3px;">25,02</span>
<span id="t129" class="t" style="letter-spacing:-0.25px;transform:scaleX(1.064);transform-origin:100% 0;right:208.0px;top:440.3px;">25,02</span>
<span id="t130" class="t" style="transform:scaleX(0.883);transform-origin:0 0;left:1048.0px;top:440.3px;">FREI BUDG VERF</span>
<div style="left:39.5px;top:447px;width:1106.0px;height:19px;background:#c9e2e2;"></div>
<div style="left:490.0px;top:447px;width:90.5px;height:19px;background:#fdfdfd;"></div>
<div style="left:490.0px;top:448px;width:90.5px;height:16px;background:#ffffc0;"></div>
<span id="t131" class="t" style="right:1090.8px;top:459.3px;">2</span>
<svg style="left:81px;top:447px" width="17" height="16" viewBox="0 0 17 16"><rect x="1.8" y="2.1" width="14" height="12.9" fill="#fff" stroke="#7a7a7a" stroke-width="0.9"/><rect x="4.9" y="4.9" width="8.2" height="7.6" fill="#f2f7fc" stroke="#2a6fb0" stroke-width="1.1"/><path d="M6.8 8.7h4.4M9 6.5v4.4" stroke="#1a4a90" stroke-width="1.2"/><path d="M0 0.2l5.2 3.9-5.2 3.9z" fill="#5cb42c"/></svg>
<span id="t132" class="t" style="transform:scaleX(1.006);transform-origin:0 0;left:112.4px;top:459.3px;">N4-0003-5</span>
<span id="t133" class="t" style="transform:scaleX(0.961);transform-origin:0 0;left:231.6px;top:459.3px;">Außenanlagen</span>
<span id="t134" class="t" style="letter-spacing:-0.25px;transform:scaleX(1.058);transform-origin:100% 0;right:684.0px;top:459.3px;">76.100,00</span>
<span id="t135" class="t" style="letter-spacing:-0.25px;transform:scaleX(1.058);transform-origin:100% 0;right:593.0px;top:459.3px;">76.800,00</span>
<span id="t136" class="t" style="letter-spacing:-0.25px;transform:scaleX(1.074);transform-origin:100% 0;right:424.3px;top:459.3px;">3.100,00</span>
<span id="t137" class="t" style="letter-spacing:-0.25px;transform:scaleX(1.077);transform-origin:100% 0;right:347.3px;top:459.3px;">3.794,18</span>
<span id="t138" class="t" style="letter-spacing:-0.25px;transform:scaleX(1.032);transform-origin:100% 0;right:278.3px;top:459.3px;">4,94</span>
<span id="t139" class="t" style="letter-spacing:-0.25px;transform:scaleX(1.031);transform-origin:100% 0;right:208.7px;top:459.3px;">4,94</span>
<span id="t140" class="t" style="transform:scaleX(0.883);transform-origin:0 0;left:1048.0px;top:459.3px;">FREI BUDG VERF</span>
<div style="left:39.5px;top:466px;width:1106.0px;height:19px;background:#c9e2e2;"></div>
<div style="left:490.0px;top:466px;width:90.5px;height:19px;background:#fdfdfd;"></div>
<div style="left:490.0px;top:467px;width:90.5px;height:16px;background:#ffffc0;"></div>
<span id="t141" class="t" style="right:1090.8px;top:478.3px;">2</span>
<svg style="left:81px;top:466px" width="17" height="16" viewBox="0 0 17 16"><rect x="1.8" y="2.1" width="14" height="12.9" fill="#fff" stroke="#7a7a7a" stroke-width="0.9"/><rect x="4.9" y="4.9" width="8.2" height="7.6" fill="#f2f7fc" stroke="#2a6fb0" stroke-width="1.1"/><path d="M6.8 8.7h4.4M9 6.5v4.4" stroke="#1a4a90" stroke-width="1.2"/><path d="M0 0.2l5.2 3.9-5.2 3.9z" fill="#5cb42c"/></svg>
<span id="t142" class="t" style="transform:scaleX(0.995);transform-origin:0 0;left:112.4px;top:478.3px;">N4-0003-6</span>
<span id="t143" class="t" style="transform:scaleX(1.015);transform-origin:0 0;left:231.6px;top:478.3px;">Ausstattung und Kunstwerke</span>
<span id="t144" class="t" style="letter-spacing:-0.25px;transform:scaleX(1.064);transform-origin:100% 0;right:683.8px;top:478.3px;">4.990,00</span>
<span id="t145" class="t" style="letter-spacing:-0.25px;transform:scaleX(1.071);transform-origin:100% 0;right:592.9px;top:478.3px;">7.280,00</span>
<span id="t146" class="t" style="letter-spacing:-0.25px;transform:scaleX(1.083);transform-origin:100% 0;right:424.7px;top:478.3px;">1.190,00</span>
<span id="t147" class="t" style="letter-spacing:-0.25px;transform:scaleX(1.083);transform-origin:100% 0;right:347.3px;top:478.3px;">1.190,00</span>
<span id="t148" class="t" style="letter-spacing:-0.25px;transform:scaleX(1.080);transform-origin:100% 0;right:277.5px;top:478.3px;">16,35</span>
<span id="t149" class="t" style="letter-spacing:-0.25px;transform:scaleX(1.082);transform-origin:100% 0;right:207.9px;top:478.3px;">16,35</span>
<span id="t150" class="t" style="transform:scaleX(0.883);transform-origin:0 0;left:1048.0px;top:478.3px;">FREI BUDG VERF</span>
<div style="left:39.5px;top:485px;width:1106.0px;height:19px;background:#c9e2e2;"></div>
<div style="left:490.0px;top:485px;width:90.5px;height:19px;background:#fdfdfd;"></div>
<div style="left:490.0px;top:486px;width:90.5px;height:16px;background:#ffffc0;"></div>
<span id="t151" class="t" style="right:1090.8px;top:497.3px;">2</span>
<svg style="left:81px;top:485px" width="17" height="16" viewBox="0 0 17 16"><rect x="1.8" y="2.1" width="14" height="12.9" fill="#fff" stroke="#7a7a7a" stroke-width="0.9"/><rect x="4.9" y="4.9" width="8.2" height="7.6" fill="#f2f7fc" stroke="#2a6fb0" stroke-width="1.1"/><path d="M6.8 8.7h4.4M9 6.5v4.4" stroke="#1a4a90" stroke-width="1.2"/><path d="M0 0.2l5.2 3.9-5.2 3.9z" fill="#5cb42c"/></svg>
<span id="t152" class="t" style="transform:scaleX(0.996);transform-origin:0 0;left:112.7px;top:497.3px;">N4-0003-7</span>
<span id="t153" class="t" style="transform:scaleX(0.991);transform-origin:0 0;left:231.4px;top:497.3px;">Baunebenkosten</span>
<span id="t154" class="t" style="letter-spacing:-0.25px;transform:scaleX(1.064);transform-origin:100% 0;right:683.5px;top:497.3px;">57.123,99</span>
<span id="t155" class="t" style="letter-spacing:-0.25px;transform:scaleX(1.071);transform-origin:100% 0;right:592.9px;top:497.3px;">223.246,00</span>
<span id="t156" class="t" style="letter-spacing:-0.25px;transform:scaleX(1.061);transform-origin:100% 0;right:424.7px;top:497.3px;">33.324,99</span>
<span id="t157" class="t" style="letter-spacing:-0.25px;transform:scaleX(1.064);transform-origin:100% 0;right:347.4px;top:497.3px;">57.728,99</span>
<span id="t158" class="t" style="letter-spacing:-0.25px;transform:scaleX(1.063);transform-origin:100% 0;right:278.4px;top:497.3px;">25,86</span>
<span id="t159" class="t" style="letter-spacing:-0.25px;transform:scaleX(1.063);transform-origin:100% 0;right:207.8px;top:497.3px;">25,86</span>
<span id="t160" class="t" style="transform:scaleX(0.883);transform-origin:0 0;left:1048.0px;top:497.3px;">FREI BUDG VERF</span>
<div style="left:39.5px;top:504px;width:1106.0px;height:19px;background:#c9e2e2;"></div>
<div style="left:490.0px;top:504px;width:90.5px;height:19px;background:#fdfdfd;"></div>
<div style="left:490.0px;top:505px;width:90.5px;height:16px;background:#ffffc0;"></div>
<span id="t161" class="t" style="right:1090.8px;top:516.3px;">2</span>
<span id="t162" class="t" style="left:112.7px;top:516.3px;">N4-0003-8</span>
<span id="t163" class="t" style="transform:scaleX(1.023);transform-origin:0 0;left:232.2px;top:516.3px;">Vertrieb</span>
<span id="t164" class="t" style="letter-spacing:-0.25px;transform:scaleX(1.078);transform-origin:100% 0;right:683.5px;top:516.3px;">150.000,00</span>
<span id="t165" class="t" style="letter-spacing:-0.25px;transform:scaleX(1.078);transform-origin:100% 0;right:592.5px;top:516.3px;">150.000,00</span>
<span id="t166" class="t" style="letter-spacing:-0.25px;transform:scaleX(1.062);transform-origin:100% 0;right:424.4px;top:516.3px;">50.016,68</span>
<span id="t167" class="t" style="letter-spacing:-0.25px;transform:scaleX(1.075);transform-origin:100% 0;right:347.1px;top:516.3px;">103.742,89</span>
<span id="t168" class="t" style="letter-spacing:-0.25px;transform:scaleX(1.064);transform-origin:100% 0;right:277.9px;top:516.3px;">69,16</span>
<span id="t169" class="t" style="letter-spacing:-0.25px;transform:scaleX(1.063);transform-origin:100% 0;right:208.3px;top:516.3px;">69,16</span>
<span id="t170" class="t" style="transform:scaleX(0.883);transform-origin:0 0;left:1048.0px;top:516.3px;">FREI BUDG VERF</span>
<svg style="left:489.5px;top:333px" width="92" height="20" viewBox="0 0 92 20"><path d="M0.8 6V1h5M85.5 1h5v5M90.5 13.5v5h-5M5.8 18.5h-5v-5" fill="none" stroke="#d81c1c" stroke-width="1.5"/></svg>
<div style="left:16.5px;top:275.2px;width:1129.0px;height:1px;background:rgba(185,195,195,0.45);"></div>
<div style="left:16.5px;top:294.2px;width:1129.0px;height:1px;background:rgba(185,195,195,0.45);"></div>
<div style="left:16.5px;top:313.2px;width:1129.0px;height:1px;background:rgba(185,195,195,0.45);"></div>
<div style="left:16.5px;top:332.2px;width:1129.0px;height:1px;background:rgba(185,195,195,0.45);"></div>
<div style="left:16.5px;top:351.2px;width:1129.0px;height:1px;background:rgba(185,195,195,0.45);"></div>
<div style="left:16.5px;top:370.2px;width:1129.0px;height:1px;background:rgba(185,195,195,0.45);"></div>
<div style="left:16.5px;top:389.2px;width:1129.0px;height:1px;background:rgba(185,195,195,0.45);"></div>
<div style="left:16.5px;top:408.2px;width:1129.0px;height:1px;background:rgba(185,195,195,0.45);"></div>
<div style="left:16.5px;top:427.2px;width:1129.0px;height:1px;background:rgba(185,195,195,0.45);"></div>
<div style="left:16.5px;top:446.2px;width:1129.0px;height:1px;background:rgba(185,195,195,0.45);"></div>
<div style="left:16.5px;top:465.2px;width:1129.0px;height:1px;background:rgba(185,195,195,0.45);"></div>
<div style="left:16.5px;top:484.2px;width:1129.0px;height:1px;background:rgba(185,195,195,0.45);"></div>
<div style="left:16.5px;top:503.2px;width:1129.0px;height:1px;background:rgba(185,195,195,0.45);"></div>
<div style="left:16.5px;top:522.2px;width:1129.0px;height:1px;background:rgba(185,195,195,0.45);"></div>
<div style="left:39.0px;top:255.5px;width:1px;height:267.5px;background:rgba(178,170,170,0.55);"></div>
<div style="left:80.0px;top:255.5px;width:1px;height:267.5px;background:rgba(178,170,170,0.55);"></div>
<div style="left:226.8px;top:255.5px;width:1px;height:267.5px;background:rgba(178,170,170,0.55);"></div>
<div style="left:398.2px;top:255.5px;width:1px;height:267.5px;background:rgba(178,170,170,0.55);"></div>
<div style="left:489.0px;top:255.5px;width:1px;height:267.5px;background:rgba(178,170,170,0.55);"></div>
<div style="left:580.0px;top:255.5px;width:1px;height:267.5px;background:rgba(178,170,170,0.55);"></div>
<div style="left:671.1px;top:255.5px;width:1px;height:267.5px;background:rgba(178,170,170,0.55);"></div>
<div style="left:748.0px;top:255.5px;width:1px;height:267.5px;background:rgba(178,170,170,0.55);"></div>
<div style="left:825.1px;top:255.5px;width:1px;height:267.5px;background:rgba(178,170,170,0.55);"></div>
<div style="left:894.5px;top:255.5px;width:1px;height:267.5px;background:rgba(178,170,170,0.55);"></div>
<div style="left:964.3px;top:255.5px;width:1px;height:267.5px;background:rgba(178,170,170,0.55);"></div>
<div style="left:1013.2px;top:255.5px;width:1px;height:267.5px;background:rgba(178,170,170,0.55);"></div>
<div style="left:1043.0px;top:255.5px;width:1px;height:267.5px;background:rgba(178,170,170,0.55);"></div>
<div style="left:16.5px;top:536px;width:1128px;height:1px;background:#d2d2d2;"></div>
<div style="left:437px;top:542.8px;width:153.5px;height:10.2px;background:#b7c3cf;"></div>
<div style="left:510.5px;top:546px;width:1px;height:4px;background:#fff;"></div>
<div style="left:512.5px;top:546px;width:1px;height:4px;background:#fff;"></div>
<div style="left:514.5px;top:546px;width:1px;height:4px;background:#fff;"></div>
<div style="left:516.5px;top:546px;width:1px;height:4px;background:#fff;"></div>
<svg style="left:404px;top:543.6px" width="6" height="9" viewBox="0 0 6 9"><path d="M4.4 0.8L1 4.2l3.4 3.4" fill="none" stroke="#555" stroke-width="1.5"/></svg>
<svg style="left:422px;top:543.6px" width="6" height="9" viewBox="0 0 6 9"><path d="M1 0.8l3.4 3.4L1 7.6" fill="none" stroke="#555" stroke-width="1.5"/></svg>
<svg style="left:1113px;top:543.6px" width="6" height="9" viewBox="0 0 6 9"><path d="M4.4 0.8L1 4.2l3.4 3.4" fill="none" stroke="#555" stroke-width="1.5"/></svg>
<svg style="left:1131px;top:543.6px" width="6" height="9" viewBox="0 0 6 9"><path d="M1 0.8l3.4 3.4L1 7.6" fill="none" stroke="#555" stroke-width="1.5"/></svg>
</div>
</body></html>
